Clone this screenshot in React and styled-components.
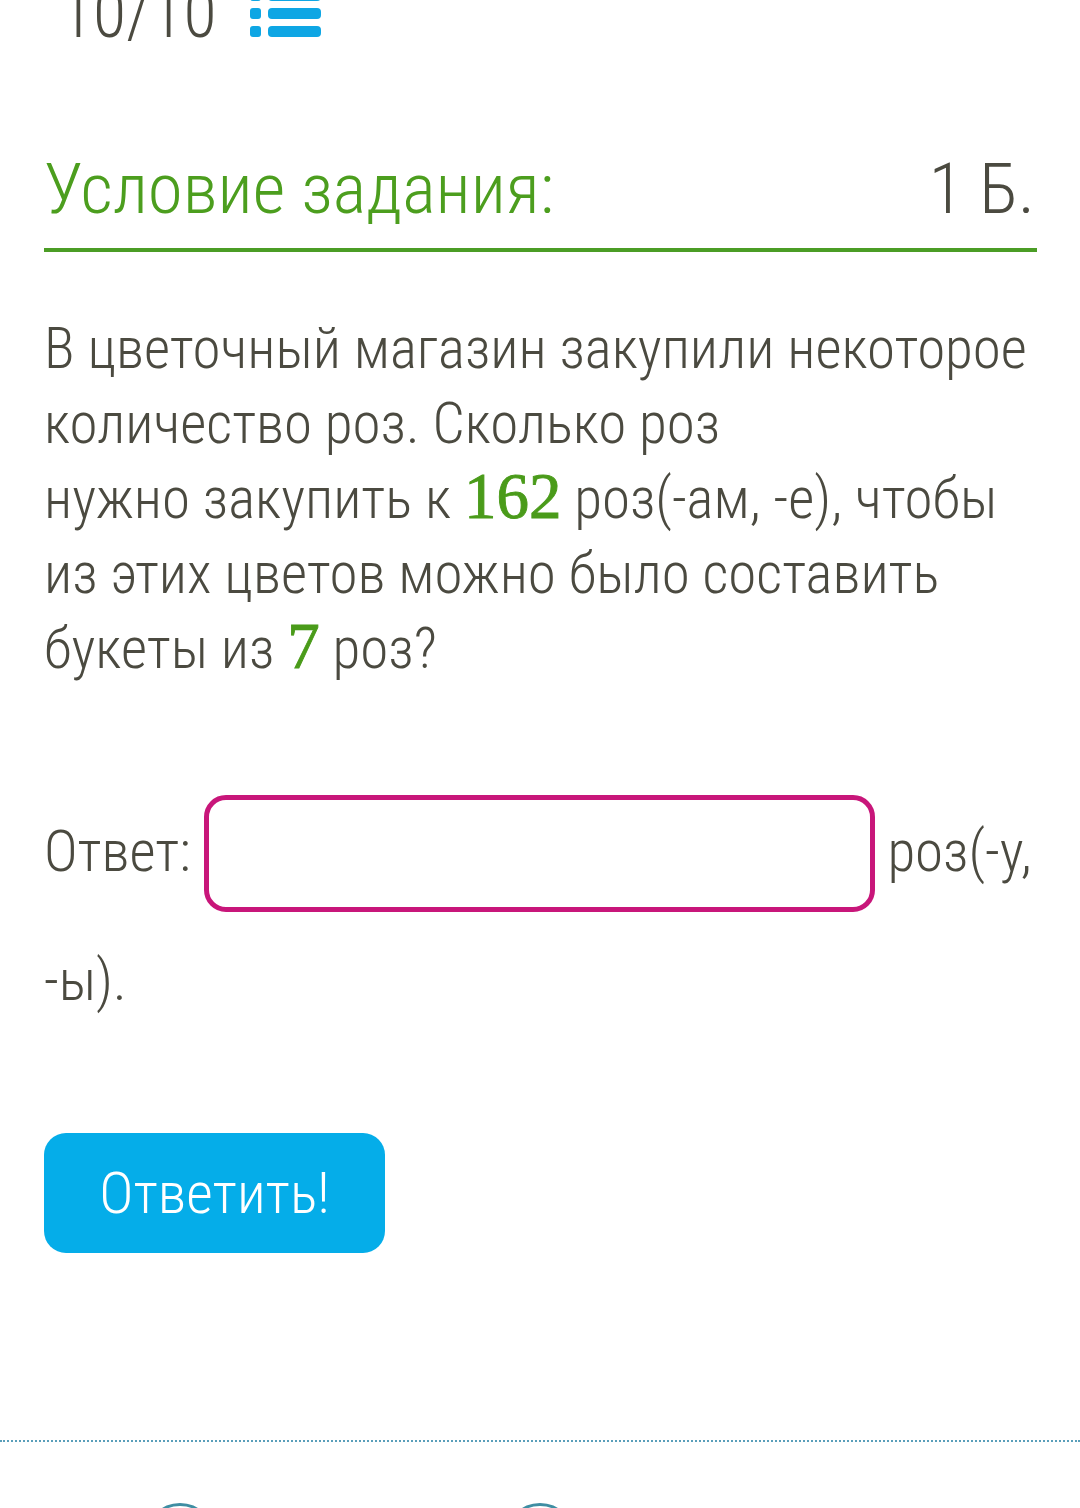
import styled, { createGlobalStyle } from "styled-components";

const Global = createGlobalStyle`
body {
  margin: 0;
  background: #fff;
  overflow: hidden;
}
`;

const Page = styled.div`
font-family: "Roboto Condensed", Roboto, "Liberation Sans", sans-serif;
font-weight: 300;
color: #4b4a40;
`;

const Content = styled.div`
padding: 0 40px 0 44px;
`;

const TopBar = styled.div`
display: flex;
align-items: baseline;
gap: 34px;
margin-top: -17px;
padding-left: 16px;
font-size: 68px;
line-height: 62px;
`;

const TitleRow = styled.div`
display: flex;
justify-content: space-between;
align-items: baseline;
margin-top: 104px;
padding-bottom: 19px;
border-bottom: 4px solid #4b9d25;
margin-right: 3px;
font-size: 71px;
line-height: 80px;
`;

const Title = styled.h2`
margin: 0;
font-size: inherit;
font-weight: 300;
color: #4c9e1e;
`;

const Points = styled.span`
color: #4b4a40;
padding-right: 2px;
`;

const Question = styled.p`
margin: 59px 0 0;
font-size: 57px;
line-height: 75px;
`;

const Num = styled.span`
font-family: "Liberation Serif", "Times New Roman", serif;
font-weight: 400;
font-size: 65px;
line-height: 1;
color: #4a9b1a;
-webkit-text-stroke: 0.9px #4a9b1a;
`;

const Answer = styled.div`
margin-top: 83px;
font-size: 57px;
line-height: 75px;
`;

const AnswerInput = styled.input`
box-sizing: border-box;
width: 671px;
height: 117px;
margin: 31px 0 26px;
vertical-align: middle;
position: relative;
top: -5px;
border: 5px solid #c8167a;
border-radius: 22px;
background: #fff;
outline: none;
font: inherit;
`;

const SubmitButton = styled.button`
display: block;
margin-top: 115px;
width: 341px;
height: 120px;
border: none;
border-radius: 22px;
background: #05ade9;
color: #fff;
font-family: inherit;
font-weight: 300;
font-size: 58px;
cursor: pointer;
`;

const Divider = styled.div`
margin-top: 187px;
border-top: 2px dotted #5a9fba;
`;

const Footer = styled.div`
display: flex;
gap: 290px;
padding-left: 145px;
margin-top: 61px;
`;

const Circle = styled.div`
width: 70px;
height: 70px;
border-radius: 50%;
border: 3px solid #3f8ea3;
box-sizing: border-box;
`;

function ListIcon() {
  return (
    <svg width="72" height="47" viewBox="0 0 72 47">
      {[0, 18, 36].map((y) => (
        <g key={y} fill="#0ea6e4">
          <rect x="0" y={y} width="11" height="11" rx="3" />
          <rect x="18" y={y} width="53" height="11" rx="4" />
        </g>
      ))}
    </svg>
  );
}

export default function App() {
  return (
    <Page>
      <Global />
      <Content>
        <TopBar>
          <span>10/10</span>
          <ListIcon />
        </TopBar>
        <TitleRow>
          <Title>Условие задания:</Title>
          <Points>1 Б.</Points>
        </TitleRow>
        <Question>
          В цветочный магазин закупили некоторое количество роз. Сколько роз
          <br />
          нужно закупить к <Num>162</Num> роз(-ам, -е), чтобы из этих цветов можно было составить
          букеты из <Num>7</Num> роз?
        </Question>
        <Answer>
          Ответ: <AnswerInput type="text" aria-label="Ответ" /> роз(-у, -ы).
        </Answer>
        <SubmitButton>Ответить!</SubmitButton>
      </Content>
      <Divider />
      <Footer>
        <Circle />
        <Circle />
      </Footer>
    </Page>
  );
}
